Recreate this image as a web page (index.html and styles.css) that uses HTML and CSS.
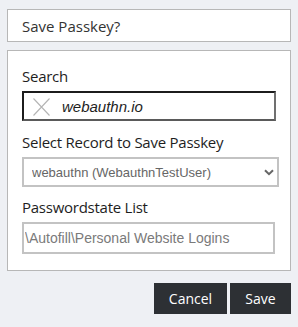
FILE: index.html
```html
<!DOCTYPE html>
<html>
<head>
<meta charset="utf-8">
<link rel="stylesheet" href="styles.css">
</head>
<body>
<div class="header">Save Passkey?</div>
<div class="card">
  <label class="label">Search</label>
  <div class="search">
    <svg class="clear" width="17" height="18" viewBox="0 0 17 18"><path d="M0.5 0.5 L16.5 17.5 M16.5 0.5 L0.5 17.5" stroke="#b4b4b4" stroke-width="1.1" fill="none"/></svg>
    <input class="search-input" type="text" value="webauthn.io">
  </div>
  <label class="label">Select Record to Save Passkey</label>
  <div class="select-wrap">
    <select class="select"><option>webauthn (WebauthnTestUser)</option></select>
    <svg class="chev" width="10" height="7" viewBox="0 0 10 7"><path d="M1 1.2 L5 5.2 L9 1.2" stroke="#666" stroke-width="2" fill="none"/></svg>
  </div>
  <label class="label">Passwordstate List</label>
  <input class="list" type="text" value="\Autofill\Personal Website Logins">
</div>
<div class="actions">
  <button class="btn btn-cancel">Cancel</button>
  <button class="btn btn-save">Save</button>
</div>
</body>
</html>
```
FILE: styles.css
```css
html, body {
  margin: 0;
  background: #eef0f4;
}
body {
  padding: 9px 7px 0;
  font-family: "Open Sans", "Noto Sans", sans-serif;
  color: #2a2a2a;
}
.header {
  box-sizing: border-box;
  height: 33px;
  background: #fff;
  border: 1px solid #b7b7b7;
  padding: 1px 14px 0;
  display: flex;
  align-items: center;
  font-size: 15px;
  line-height: 20px;
  color: #333;
}
.card {
  margin-top: 8px;
  background: #fff;
  border: 1px solid #b7b7b7;
  padding: 15px 14px 16px;
  display: flex;
  flex-direction: column;
  align-items: flex-start;
}
.label {
  display: block;
  font-size: 15px;
  line-height: 20px;
  letter-spacing: -0.25px;
  color: #1e1e1e;
  margin-bottom: 5px;
}
.search {
  box-sizing: border-box;
  width: 254px;
  height: 30px;
  border-style: solid;
  border-width: 2px;
  border-color: #1c1c1c #707070 #5a5a5a #1c1c1c;
  display: flex;
  align-items: center;
  padding-left: 9px;
  margin-bottom: 11px;
}
.clear {
  flex: none;
  margin-top: 1px;
}
.search-input {
  border: 0;
  outline: none;
  padding: 0;
  margin-left: 12px;
  font-family: "Liberation Sans", Arial, sans-serif;
  font-style: italic;
  font-size: 15px;
  color: #1e1e1e;
  width: 180px;
  background: transparent;
}
.select-wrap {
  position: relative;
  margin-bottom: 10px;
}
.select {
  box-sizing: border-box;
  appearance: none;
  -webkit-appearance: none;
  width: 257px;
  height: 30px;
  border: 2px solid #c3c3c3;
  border-radius: 0;
  background: #fff;
  padding: 0 0 0 8px;
  font-family: "Liberation Sans", Arial, sans-serif;
  font-size: 13px;
  color: #666;
  outline: none;
}
.chev {
  position: absolute;
  right: 5px;
  top: 12px;
  pointer-events: none;
}
.list {
  box-sizing: border-box;
  width: 253px;
  height: 32px;
  border: 2px solid #c3c3c3;
  padding: 0 0 0 1px;
  font-family: "Liberation Sans", Arial, sans-serif;
  font-size: 14px;
  color: #7a7a7a;
  outline: none;
  margin: 0;
}
.actions {
  margin-top: 12px;
  display: flex;
  justify-content: flex-end;
  gap: 3px;
}
.btn {
  box-sizing: border-box;
  height: 31px;
  border: 0;
  border-radius: 0;
  background: #2d3034;
  color: #fff;
  font-family: "Open Sans", "Noto Sans", sans-serif;
  font-size: 14px;
  padding: 0;
}
.btn-cancel {
  width: 73px;
}
.btn-save {
  width: 61px;
}
```
